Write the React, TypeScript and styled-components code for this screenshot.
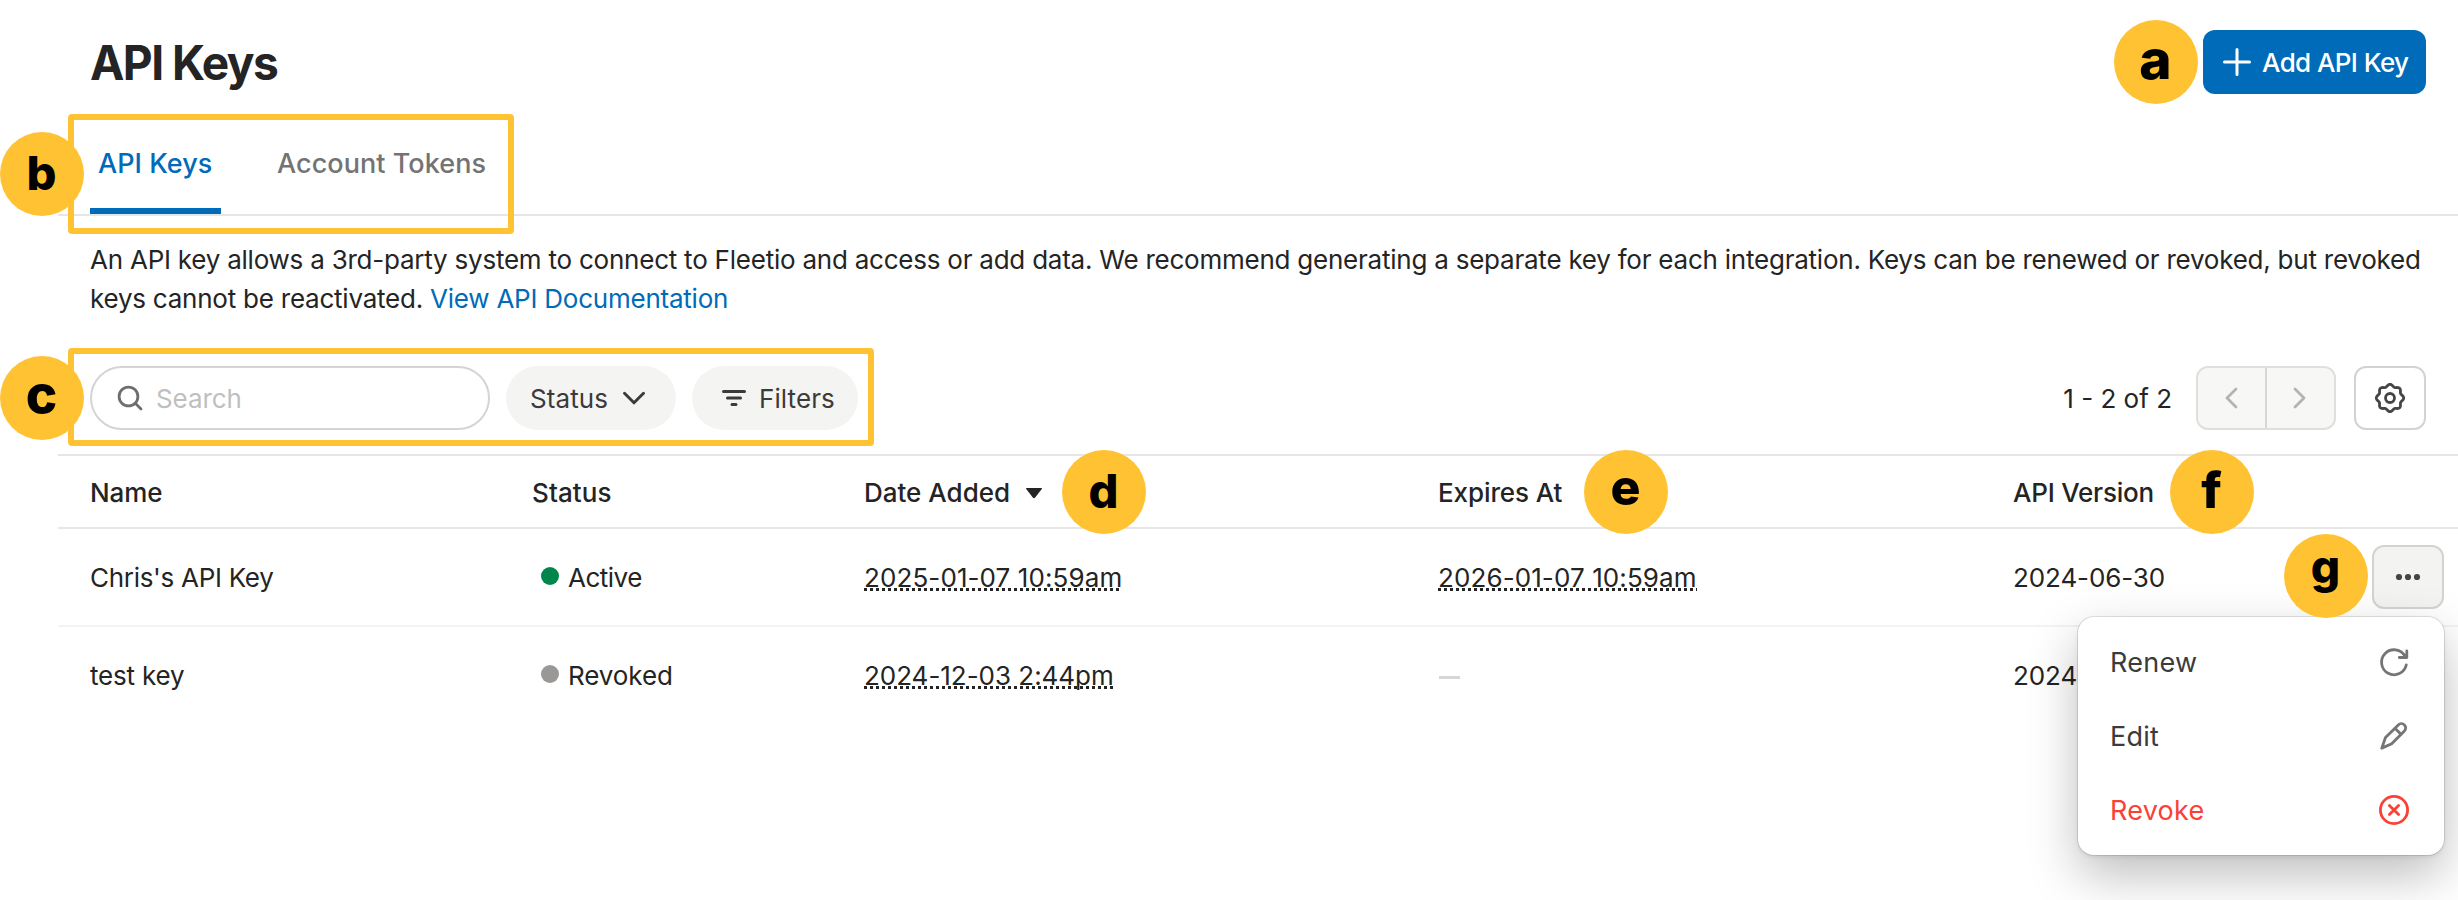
import React from 'react';
import styled, { createGlobalStyle } from 'styled-components';

const GlobalStyle = createGlobalStyle`
  *, *::before, *::after { box-sizing: border-box; }
  body { margin: 0; background: #fff; }
  button, input { font: inherit; letter-spacing: inherit; }
`;

const ink = '#242424';
const blue = '#006bb8';
const amber = '#ffc233';

const Page = styled.div`
  position: relative;
  width: 2458px;
  height: 900px;
  overflow: hidden;
  background: #fff;
  color: ${ink};
  font: 400 26px/40px Inter, "Liberation Sans", sans-serif;
  letter-spacing: -0.1px;
  white-space: nowrap;
`;

const Header = styled.header`
  display: flex;
  align-items: center;
  justify-content: space-between;
  height: 124px;
  padding: 0 32px 0 90px;
`;

const Title = styled.h1`
  margin: 0;
  padding-top: 2px;
  font-size: 48px;
  line-height: 60px;
  font-weight: 650;
  letter-spacing: -1.6px;
  transform: scaleX(0.96);
  transform-origin: left;
`;

const Label = styled.span`
  padding-top: 2px;
`;

const PrimaryButton = styled.button`
  display: flex;
  align-items: center;
  gap: 9px;
  width: 223px;
  height: 64px;
  padding: 0 0 0 18px;
  border: 0;
  border-radius: 12px;
  background: ${blue};
  color: #fff;
  font-weight: 500;
  letter-spacing: -0.6px;
`;

const Tabs = styled.nav`
  display: flex;
  gap: 48px;
  height: 92px;
  margin-left: 58px;
  padding-left: 32px;
  border-bottom: 2px solid #e6e6e6;
`;

const Tab = styled.a<{ $active?: boolean }>`
  height: 90px;
  padding: 20px 8px 0;
  border-bottom: 6px solid ${(p) => (p.$active ? blue : 'transparent')};
  color: ${(p) => (p.$active ? blue : '#737373')};
  font-size: 27px;
  font-weight: 500;
  letter-spacing: 0.06px;
  min-width: 131px;
`;

const Description = styled.p`
  margin: 24px 0 48px;
  padding-left: 90px;
  line-height: 39px;
  letter-spacing: -0.23px;
`;

const DocLink = styled.a`
  color: ${blue};
`;

const Toolbar = styled.div`
  display: flex;
  align-items: center;
  height: 64px;
  padding: 0 32px 0 90px;
`;

const SearchField = styled.label`
  display: flex;
  align-items: center;
  gap: 12px;
  width: 400px;
  height: 64px;
  margin-right: 16px;
  padding-left: 24px;
  border: 2px solid #d4d4d4;
  border-radius: 32px;
`;

const SearchInput = styled.input`
  width: 280px;
  padding: 2px 0 0;
  border: 0;
  outline: 0;
  background: transparent;
  &::placeholder { color: #bfbfbf; }
`;

const Pill = styled.button<{ $width: number; $gap: number }>`
  display: flex;
  align-items: center;
  gap: ${(p) => p.$gap}px;
  width: ${(p) => p.$width}px;
  height: 64px;
  margin-right: 16px;
  padding: 0 0 0 24px;
  border: 0;
  border-radius: 32px;
  background: #f4f4f2;
  color: #3b3b3b;
  letter-spacing: 0.1px;
`;

const Range = styled.span`
  margin-left: auto;
  margin-right: 24px;
  padding-top: 2px;
  letter-spacing: 0;
`;

const Pager = styled.div`
  display: flex;
  width: 140px;
  height: 64px;
  margin-right: 18px;
  border: 2px solid #dfdfde;
  border-radius: 12px;
  background: #f7f7f5;
  overflow: hidden;
`;

const PagerButton = styled.button`
  display: flex;
  align-items: center;
  justify-content: center;
  flex: 1;
  padding: 0 1px 0 0;
  border: 0;
  background: none;
  & + & { border-left: 2px solid #d6d6d5; }
`;

const IconButton = styled.button<{ $filled?: boolean }>`
  display: flex;
  align-items: center;
  justify-content: center;
  width: 72px;
  height: 64px;
  padding: 0;
  border: 2px solid #d3d3d2;
  border-radius: 12px;
  background: ${(p) => (p.$filled ? '#f3f3f1' : '#fff')};
`;

const Table = styled.div`
  margin: 24px 0 0 58px;
  border-top: 2px solid #e6e6e6;
`;

const TableRow = styled.div<{ $head?: boolean; $last?: boolean }>`
  display: grid;
  grid-template-columns: 442px 332px 574px 575px 1fr 72px;
  align-items: center;
  height: ${(p) => (p.$head ? 73 : 98)}px;
  padding: 0 14px 0 32px;
  border-bottom: 2px solid ${(p) => (p.$last ? 'transparent' : p.$head ? '#e6e6e6' : '#f3f3f3')};
  font-weight: ${(p) => (p.$head ? 500 : 400)};
`;

const Cell = styled.span<{ $track?: number; $gap?: number; $drop?: number }>`
  display: flex;
  align-items: center;
  gap: ${(p) => p.$gap ?? 0}px;
  padding-top: ${(p) => p.$drop ?? 2}px;
  letter-spacing: ${(p) => p.$track ?? -0.1}px;
`;

const StatusDot = styled.i<{ $color: string }>`
  width: 18px;
  height: 18px;
  margin: 0 9px 4px 9px;
  border-radius: 50%;
  background: ${(p) => p.$color};
`;

const Timestamp = styled.time`
  height: 40px;
  background: repeating-linear-gradient(90deg, ${ink} 0 3px, transparent 3px 6px) 0 30px / 100% 3px no-repeat;
`;

const EmptyValue = styled.i`
  width: 21px;
  height: 3px;
  margin: 3px 0 0 1px;
  background: #d6d6d6;
`;

const Menu = styled.div`
  position: absolute;
  left: 2078px;
  top: 617px;
  width: 366px;
  height: 238px;
  padding: 8px 34px 8px 32px;
  border-radius: 16px;
  background: #fff;
  box-shadow: 0 0 0 1px rgba(0, 0, 0, 0.1), 0 2px 4px rgba(0, 0, 0, 0.08), 0 20px 50px rgba(0, 0, 0, 0.26);
`;

const MenuItem = styled.div<{ $danger?: boolean }>`
  display: flex;
  align-items: center;
  justify-content: space-between;
  height: 74px;
  color: ${(p) => (p.$danger ? '#fb4035' : '#3b3b3b')};
  font-size: 27px;
  letter-spacing: 0.25px;
  svg { color: ${(p) => (p.$danger ? '#fb4035' : '#757575')}; }
`;

const Highlight = styled.div<{ $top: number; $width: number; $height: number }>`
  position: absolute;
  left: 68px;
  top: ${(p) => p.$top}px;
  width: ${(p) => p.$width}px;
  height: ${(p) => p.$height}px;
  border: 6px solid ${amber};
  border-radius: 4px;
`;

const Marker = styled.div<{ $x: number; $y: number; $size: number; $lift: number }>`
  position: absolute;
  left: ${(p) => p.$x}px;
  top: ${(p) => p.$y}px;
  display: flex;
  align-items: center;
  justify-content: center;
  width: 84px;
  height: 84px;
  padding: 0 1px ${(p) => p.$lift * 2}px 0;
  border-radius: 50%;
  background: ${amber};
  color: #000;
  font-size: ${(p) => p.$size}px;
  line-height: 60px;
  font-weight: 800;
  letter-spacing: 0;
`;

const Icon = ({ d, w = 32, h = 32, color = 'currentColor', stroke = 2.8, children }: {
  d?: string; w?: number; h?: number; color?: string; stroke?: number; children?: React.ReactNode;
}) => (
  <svg width={w} height={h} viewBox={`0 0 ${w} ${h}`} fill="none" stroke={color} strokeWidth={stroke}
    strokeLinecap="round" strokeLinejoin="round">
    {d && <path d={d} />}
    {children}
  </svg>
);

const gearOutline = Array.from({ length: 97 }, (_, i) => {
  const t = (i / 96) * Math.PI * 2;
  const r = 12.6 + 1.1 * Math.cos(8 * t);
  return `${i ? 'L' : 'M'}${(16 + r * Math.cos(t)).toFixed(2)} ${(16 + r * Math.sin(t)).toFixed(2)}`;
}).join('') + 'Z';

const markers = [
  { label: 'a', x: 2114, y: 20, size: 55, lift: 3 },
  { label: 'b', x: 0, y: 132, size: 47, lift: 1 },
  { label: 'c', x: 0, y: 356, size: 53, lift: 4 },
  { label: 'd', x: 1062, y: 450, size: 47, lift: 1 },
  { label: 'e', x: 1584, y: 450, size: 50, lift: 5 },
  { label: 'f', x: 2170, y: 450, size: 50, lift: 2 },
  { label: 'g', x: 2284, y: 534, size: 46, lift: 10 },
];

export default function App() {
  return (
    <Page>
      <GlobalStyle />
      <Header>
        <Title>API Keys</Title>
        <PrimaryButton>
          <Icon d="M16 3.5v25M3.5 16h25" stroke={3} />
          <Label>Add API Key</Label>
        </PrimaryButton>
      </Header>
      <Tabs>
        <Tab $active>API Keys</Tab>
        <Tab>Account Tokens</Tab>
      </Tabs>
      <Description>
        An API key allows a 3rd-party system to connect to Fleetio and access or add data. We recommend generating a separate key for each integration. Keys can be renewed or revoked, but revoked
        <br />
        keys cannot be reactivated. <DocLink>View API Documentation</DocLink>
      </Description>
      <Toolbar>
        <SearchField>
          <Icon w={28} h={28} color="#6e6e6e">
            <circle cx="12.5" cy="12.5" r="9.4" />
            <path d="M19.3 19.3L25 25" />
          </Icon>
          <SearchInput placeholder="Search" />
        </SearchField>
        <Pill $width={170} $gap={12}>
          <Label>Status</Label>
          <Icon w={28} h={28} d="M4.5 9.3L14 18.8L23.5 9.3" stroke={3} />
        </Pill>
        <Pill $width={166} $gap={9}>
          <Icon w={34} h={28} d="M7.5 7.5H28.5M11.5 14H24.5M16 20.5H20" stroke={3} />
          <Label>Filters</Label>
        </Pill>
        <Range>1 - 2 of 2</Range>
        <Pager>
          <PagerButton><Icon w={24} h={28} d="M17 5L8 14L17 23" color="#b3b3b3" /></PagerButton>
          <PagerButton><Icon w={24} h={28} d="M7 5L16 14L7 23" color="#b3b3b3" /></PagerButton>
        </Pager>
        <IconButton>
          <Icon d={gearOutline} color="#454545"><circle cx="16" cy="16" r="4.5" /></Icon>
        </IconButton>
      </Toolbar>
      <Table>
        <TableRow $head>
          <Cell>Name</Cell>
          <Cell $track={0.1}>Status</Cell>
          <Cell $track={0} $gap={15}>
            Date Added
            <svg width="18" height="12" viewBox="0 0 18 12">
              <path d="M1.6 1h14.8q1 0 .4 1l-6.6 8.6q-1.2 1.2-2.4 0L1.2 2q-.6-1 .4-1z" fill={ink} />
            </svg>
          </Cell>
          <Cell>Expires At</Cell>
          <Cell $track={-0.22}>API Version</Cell>
        </TableRow>
        <TableRow>
          <Cell $track={-0.3}>Chris's API Key</Cell>
          <Cell $track={-0.5}><StatusDot $color="#00854a" />Active</Cell>
          <Cell $track={0.1}><Timestamp>2025-01-07 10:59am</Timestamp></Cell>
          <Cell $track={0.1}><Timestamp>2026-01-07 10:59am</Timestamp></Cell>
          <Cell>2024-06-30</Cell>
          <IconButton $filled>
            <svg width="32" height="32" viewBox="0 0 32 32" fill="#454545">
              <circle cx="7" cy="16" r="3.1" />
              <circle cx="16" cy="16" r="3.1" />
              <circle cx="25" cy="16" r="3.1" />
            </svg>
          </IconButton>
        </TableRow>
        <TableRow $last>
          <Cell $track={-0.2}>test key</Cell>
          <Cell $track={-0.1}><StatusDot $color="#999896" />Revoked</Cell>
          <Cell $track={-0.03}><Timestamp>2024-12-03 2:44pm</Timestamp></Cell>
          <Cell><EmptyValue /></Cell>
          <Cell>2024-06-30</Cell>
        </TableRow>
      </Table>
      <Highlight $top={114} $width={446} $height={120} />
      <Highlight $top={348} $width={806} $height={98} />
      <Menu>
        <MenuItem><Label>Renew</Label><Icon d="M28.3 18.8A12.5 12.5 0 1 1 27 10.2M28.8 5v6.5h-7.5" /></MenuItem>
        <MenuItem><Label>Edit</Label><Icon d="M3.8 28.1L7.5 17.5L20.3 4.9a4.3 4.3 0 0 1 6.1 6.1L13.7 23.8ZM17 8.2L23.2 14.4" /></MenuItem>
        <MenuItem $danger><Label>Revoke</Label><Icon d="M11.4 11.4L20.6 20.6M20.6 11.4L11.4 20.6"><circle cx="16" cy="16" r="13.6" /></Icon></MenuItem>
      </Menu>
      {markers.map((m) => (
        <Marker key={m.label} $x={m.x} $y={m.y} $size={m.size} $lift={m.lift}>{m.label}</Marker>
      ))}
    </Page>
  );
}
